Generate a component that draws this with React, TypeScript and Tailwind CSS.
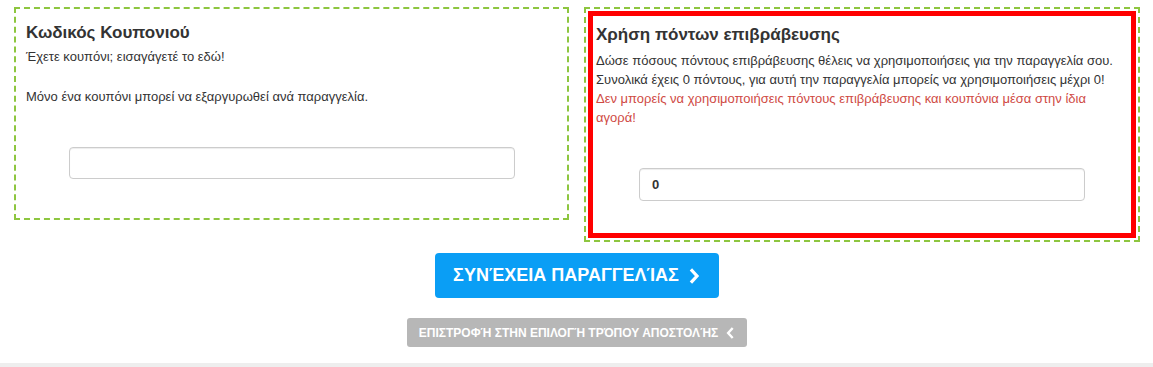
import React from "react";

const font = { fontFamily: '"Liberation Sans", Arial, sans-serif' };

function ChevronRight({ className }: { className?: string }) {
  return (
    <svg viewBox="0 0 10 16" className={className} fill="none" stroke="currentColor" strokeWidth="3.2" strokeLinecap="square" strokeLinejoin="miter">
      <path d="M2.5 2.5 L7.5 8 L2.5 13.5" />
    </svg>
  );
}

function ChevronLeft({ className }: { className?: string }) {
  return (
    <svg viewBox="0 0 10 16" className={className} fill="none" stroke="currentColor" strokeWidth="3.2" strokeLinecap="square" strokeLinejoin="miter">
      <path d="M7.5 2.5 L2.5 8 L7.5 13.5" />
    </svg>
  );
}

export default function App() {
  return (
    <div className="w-[1153px] h-[367px] bg-white text-[#333] flex flex-col" style={font}>
      <div className="flex items-start gap-[15px] pl-[14px] pt-[7px]">
        <div className="w-[555px] border-2 border-dashed border-[#8dc63f] px-[10px] pt-[14px]">
          <h3 className="text-[17px] leading-[20px] font-bold mb-[4px]">Κωδικός Κουπονιού</h3>
          <p className="text-[13px] leading-[20px]">
            Έχετε κουπόνι; εισαγάγετέ το εδώ!
            <br />
            <br />
            Μόνο ένα κουπόνι μπορεί να εξαργυρωθεί ανά παραγγελία.
          </p>
          <div className="pt-[40px] pb-[39px]">
            <input
              type="text"
              className="block w-[446px] h-[32px] mx-auto border border-[#ccc] rounded-[4px] shadow-[inset_0_1px_1px_rgba(0,0,0,0.075)] px-[12px] text-[13px] outline-none"
            />
          </div>
        </div>
        <div className="w-[556px] border-2 border-dashed border-[#8dc63f] p-[2px]">
          <div className="border-[5px] border-[#ff0000] px-[3px] pt-[9px]">
            <h3 className="text-[17px] leading-[20px] font-bold mb-[6px]">Χρήση πόντων επιβράβευσης</h3>
            <p className="text-[13px] leading-[19px]">
              Δώσε πόσους πόντους επιβράβευσης θέλεις να χρησιμοποιήσεις για την παραγγελία σου.
              <br />
              Συνολικά έχεις 0 πόντους, για αυτή την παραγγελία μπορείς να χρησιμοποιήσεις μέχρι 0!
              <br />
              <span className="text-[#cf4a44]">
                Δεν μπορείς να χρησιμοποιήσεις πόντους επιβράβευσης και κουπόνια μέσα στην ίδια αγορά!
              </span>
            </p>
            <div className="pt-[41px] pb-[32px]">
              <input
                type="text"
                defaultValue="0"
                className="block w-[446px] h-[33px] mx-auto border border-[#ccc] rounded-[4px] shadow-[inset_0_1px_1px_rgba(0,0,0,0.075)] px-[12px] text-[13px] font-bold text-[#333] outline-none"
              />
            </div>
          </div>
        </div>
      </div>
      <div className="flex flex-col items-center mt-[11px]">
        <button className="w-[284px] h-[45px] rounded-[4px] bg-[#0a9ef5] text-white font-bold text-[18px] flex items-center justify-center gap-[10px]">
          <span>ΣΥΝΈΧΕΙΑ ΠΑΡΑΓΓΕΛΊΑΣ</span>
          <ChevronRight className="w-[11px] h-[16px]" />
        </button>
        <button className="mt-[20px] w-[340px] h-[29px] rounded-[3px] bg-[#b7b7b7] text-white font-bold text-[12px] flex items-center justify-center gap-[8px]">
          <span>ΕΠΙΣΤΡΟΦΉ ΣΤΗΝ ΕΠΙΛΟΓΉ ΤΡΌΠΟΥ ΑΠΟΣΤΟΛΉΣ</span>
          <ChevronLeft className="w-[8px] h-[12px]" />
        </button>
      </div>
      <div className="mt-auto h-[4px] bg-[#eeeeee]" />
    </div>
  );
}
